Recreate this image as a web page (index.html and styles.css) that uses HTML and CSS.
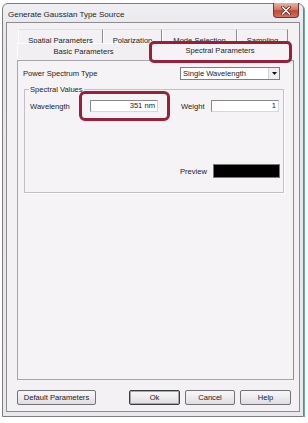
FILE: index.html
```html
<!DOCTYPE html>
<html lang="en">
<head>
    <meta charset="UTF-8">
    <meta name="viewport" content="width=device-width, initial-scale=1.0">
    <title>Generate Gaussian Type Source</title>
    <link rel="stylesheet" href="styles.css">
</head>
<body>
    <div class="window">
        <div class="titlebar">
            <span class="title">Generate Gaussian Type Source</span>
            <span class="close">
                <svg width="10" height="9" viewBox="0 0 10 9">
                    <path d="M1.5 1 L8.5 8 M8.5 1 L1.5 8" stroke="#5a1d18" stroke-width="3" stroke-linecap="round"/>
                    <path d="M1.5 1 L8.5 8 M8.5 1 L1.5 8" stroke="#fff" stroke-width="1.6" stroke-linecap="round"/>
                </svg>
            </span>
        </div>

        <div class="client">
            <div class="tab-row back">
                <span class="tab w-spatial">Spatial Parameters</span>
                <span class="tab w-polar">Polarization</span>
                <span class="tab w-mode">Mode Selection</span>
                <span class="tab w-sampling">Sampling</span>
            </div>
            <div class="tab-row front">
                <span class="tab w-basic">Basic Parameters</span>
                <span class="tab selected w-spectral">Spectral Parameters</span>
            </div>

            <div class="panel">
                <div class="power-row">
                    <span class="label">Power Spectrum Type</span>
                    <div class="select">
                        <span class="select-text">Single Wavelength</span>
                        <span class="select-arrow">
                            <svg width="5" height="4" viewBox="0 0 5 4"><path d="M0 0 H5 L2.5 3 Z" fill="#111"/></svg>
                        </span>
                    </div>
                </div>

                <fieldset class="group">
                    <legend>Spectral Values</legend>
                    <div class="value-row">
                        <span class="label w-wavelength">Wavelength</span>
                        <span class="field-wrap marked">
                            <span class="field">351 nm</span>
                        </span>
                        <span class="label w-weight">Weight</span>
                        <span class="field">1</span>
                    </div>
                    <div class="preview-row">
                        <span class="label">Preview</span>
                        <span class="swatch"></span>
                    </div>
                </fieldset>
            </div>

            <div class="buttons">
                <span class="btn w-default">Default Parameters</span>
                <span class="btn btn-ok">Ok</span>
                <span class="btn">Cancel</span>
                <span class="btn">Help</span>
            </div>
        </div>
    </div>
</body>
</html>
```

FILE: styles.css
```css
*{
    box-sizing: border-box;
}
body{
    margin: 0;
    background: #fff;
    font-family: "Liberation Sans", Arial, sans-serif;
    font-size: 7.6px;
    color: #222;
}
.window{
    position: relative;
    margin: 3px 0 0 2px;
    width: 302px;
    border: 1px solid #7d7d80;
    border-radius: 6px 6px 0 0;
    background: linear-gradient(#f0eff3, #e6e5ea 30px, #e9e8ec);
    padding: 0 3px 4px 3px;
    box-shadow: 1px 1px 0 #6fa9a8;
}
.titlebar{
    height: 18px;
    display: flex;
    align-items: center;
    justify-content: space-between;
}
.title{
    margin-left: 2px;
    margin-top: 3px;
    font-size: 8px;
    color: #1e1e1e;
}
.close{
    align-self: flex-start;
    margin-top: -1px;
    margin-right: 1px;
    width: 26px;
    height: 15px;
    display: flex;
    align-items: center;
    justify-content: center;
    border: 1px solid #74332c;
    border-top: none;
    border-radius: 0 0 4px 4px;
    background: linear-gradient(#e8b2a6, #d57a6c 45%, #c2473a 55%, #d07263);
}

.client{
    border: 1px solid #8e8c90;
    background: #f4f1f5;
    padding: 6px 5px 6px 10px;
}

/* tabs */
.tab-row{
    display: flex;
    align-items: flex-start;
}
.tab-row.back{
    margin-left: 1px;
    height: 14px;
}
.tab-row.front{
    height: 17px;
}
.tab{
    text-align: center;
    white-space: nowrap;
}
.back .tab{
    height: 14px;
    padding-top: 5px;
    line-height: 11px;
    border-top: 1px solid #e2dfe4;
    border-right: 1px solid #8d8b90;
    border-left: 1px solid #fff;
}
.front .tab{
    height: 17px;
    line-height: 16px;
    border-top: 1px solid #fdfcfd;
    border-left: 1px solid #fff;
    border-right: 1px solid #b7b4b9;
    background: #f2eff3;
}
.front .tab.selected{
    position: relative;
    z-index: 1;
    margin-top: -2px;
    height: 20px;
    line-height: 18px;
    background: #f6f3f7;
    border-right: 1px solid #8d8b90;
}
.w-spatial{ width: 85px; }
.w-polar{ width: 59px; }
.w-mode{ width: 75px; }
.w-sampling{ width: 51px; }
.w-basic{ width: 133px; }
.w-spectral{ width: 140px; }

/* red annotation frames */
.selected::after,
.marked::after{
    content: "";
    position: absolute;
    border: 3px solid #98203a;
    border-radius: 5px;
}
.selected::after{
    top: -1px;
    left: -2px;
    right: -3px;
    bottom: -2px;
}
.marked::after{
    top: -9px;
    left: -11px;
    right: -12px;
    bottom: -9px;
    border-radius: 6px;
}

.panel{
    height: 320px;
    border: 1px solid #a8a5aa;
    border-right-color: #8d8b90;
    background: #f6f3f7;
}
.power-row{
    display: flex;
    align-items: center;
    padding: 6px 13px 0 5px;
}
.select{
    margin-left: auto;
    width: 100px;
    height: 13px;
    display: flex;
    align-items: center;
    border: 1px solid #7f7d82;
    background: #fff;
}
.select-text{
    flex: 1;
    padding-left: 2px;
}
.select-arrow{
    width: 11px;
    height: 11px;
    display: flex;
    align-items: center;
    justify-content: center;
    background: #f0eef1;
    border-left: 1px solid #d4d2d6;
}

.group{
    margin: 5px 9px 0 6px;
    padding: 0 3px 14px 5px;
    border: 1px solid #c3c0c5;
    box-shadow: 1px 1px 0 #fff;
}
.group legend{
    margin-left: -1px;
    padding: 0 1px;
    line-height: 9px;
}
.value-row{
    display: flex;
    align-items: center;
    margin-top: 6px;
}
.w-wavelength{ width: 60px; }
.w-weight{
    width: 30px;
    margin-left: 23px;
}
.field-wrap{
    position: relative;
    display: flex;
}
.field{
    width: 68px;
    height: 12px;
    line-height: 10px;
    padding-right: 2px;
    text-align: right;
    background: #fff;
    border: 1px solid #8a888c;
    border-right-color: #d9d7db;
    border-bottom-color: #d9d7db;
}
.preview-row{
    display: flex;
    justify-content: flex-end;
    align-items: center;
    margin-top: 52px;
}
.preview-row .label{
    margin-right: 6px;
}
.swatch{
    width: 67px;
    height: 14px;
    background: #000;
    border: 1px solid #777;
}

/* buttons */
.buttons{
    display: flex;
    margin-top: 10px;
}
.btn{
    width: 51px;
    height: 15px;
    line-height: 13px;
    text-align: center;
    border: 1px solid #747277;
    border-radius: 2px;
    background: linear-gradient(#f7f6f8, #ecebee 50%, #dedce1);
    margin-left: 5px;
}
.btn.w-default{
    width: 79px;
    margin-left: 0;
}
.btn-ok{
    margin-left: 33px;
    border: 1px solid #3b3a3e;
    box-shadow: inset 0 0 0 1px #a9a7ad;
}
.buttons .btn:last-child{
    width: 51px;
}
.buttons .btn:nth-child(3){
    width: 50px;
}
```
